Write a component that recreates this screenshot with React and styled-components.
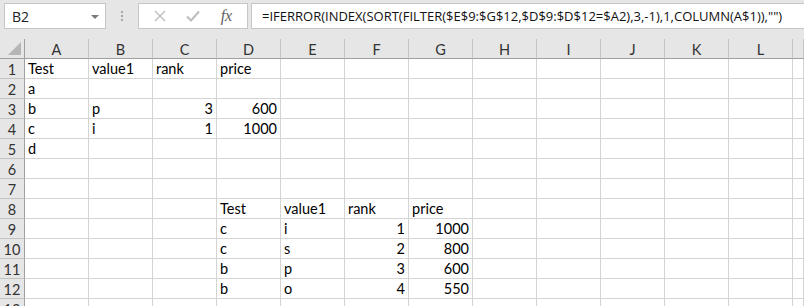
import React from "react";
import styled, { createGlobalStyle } from "styled-components";

const GlobalStyle = createGlobalStyle`
  html, body { margin: 0; padding: 0; background: #ffffff; }
  body { font-family: "Lato", "Liberation Sans", sans-serif; }
`;

const Window = styled.div`
  width: 804px;
  height: 306px;
  overflow: hidden;
  background: #e6e6e6;
  display: flex;
  flex-direction: column;
`;

const Toolbar = styled.div`
  height: 39px;
  box-sizing: border-box;
  display: flex;
  align-items: flex-start;
  padding: 3px 0 0 4px;
  flex-shrink: 0;
`;

const NameBox = styled.div`
  width: 102px;
  height: 26px;
  box-sizing: border-box;
  background: #fff;
  border: 1px solid #c6c6c6;
  display: flex;
  align-items: center;
  justify-content: space-between;
  padding: 0 6px 0 7px;
  font-family: "Open Sans", "Liberation Sans", sans-serif;
  font-size: 14px;
  color: #222;
`;

const DropArrow = styled.span`
  width: 0;
  height: 0;
  border-left: 4px solid transparent;
  border-right: 4px solid transparent;
  border-top: 4px solid #7a7a7a;
  margin-top: 1px;
`;

const Grip = styled.div`
  width: 32px;
  height: 26px;
  display: flex;
  flex-direction: column;
  align-items: center;
  justify-content: center;
  gap: 2px;
  & > span {
    width: 2px;
    height: 2px;
    background: #a6a6a6;
  }
`;

const ButtonsBox = styled.div`
  width: 110px;
  height: 26px;
  box-sizing: border-box;
  background: #fff;
  border: 1px solid #c6c6c6;
  display: flex;
  align-items: center;
  justify-content: space-around;
  padding: 0 4px;
`;

const IconBtn = styled.span`
  width: 26px;
  display: flex;
  align-items: center;
  justify-content: center;
  color: ${(p) => p.$color || "#bdbdbd"};
`;

const Fx = styled.span`
  font-family: "Liberation Serif", serif;
  font-style: italic;
  font-size: 16px;
  color: #5e5e5e;
  letter-spacing: -0.3px;
`;

const FormulaBox = styled.div`
  flex: 1;
  height: 26px;
  margin-left: 3px;
  box-sizing: border-box;
  background: #fff;
  border: 1px solid #c6c6c6;
  border-right: none;
  display: flex;
  align-items: center;
  padding-left: 10px;
  font-family: "Open Sans", "Liberation Sans", sans-serif;
  font-size: 13px;
  color: #111;
  white-space: nowrap;
  overflow: hidden;
`;

const Sheet = styled.div`
  display: grid;
  grid-template-columns: 25px repeat(12, 64px) 1fr;
  grid-auto-rows: 20px;
  background: #fff;
  flex: 1;
`;

const Corner = styled.div`
  background: #e6e6e6;
  border-right: 1px solid #9f9f9f;
  border-bottom: 1px solid #9f9f9f;
  box-sizing: border-box;
  position: relative;
  &::after {
    content: "";
    position: absolute;
    right: 3px;
    bottom: 3px;
    width: 0;
    height: 0;
    border-left: 13px solid transparent;
    border-bottom: 13px solid #b5b5b5;
  }
`;

const ColHead = styled.div`
  background: #e6e6e6;
  border-right: 1px solid #c3c3c3;
  border-bottom: 1px solid #9f9f9f;
  box-sizing: border-box;
  display: flex;
  align-items: center;
  justify-content: center;
  font-size: 14.5px;
  color: #333;
  padding-top: 1px;
`;

const RowHead = styled.div`
  background: #e6e6e6;
  border-right: 1px solid #9f9f9f;
  border-bottom: 1px solid #c3c3c3;
  box-sizing: border-box;
  display: flex;
  align-items: center;
  justify-content: center;
  font-size: 14.5px;
  color: #333;
  padding-top: 1px;
`;

const Cell = styled.div`
  border-right: 1px solid #d4d4d4;
  border-bottom: 1px solid #d4d4d4;
  box-sizing: border-box;
  padding: 0 3px;
  display: flex;
  align-items: flex-end;
  justify-content: ${(p) => (p.$num ? "flex-end" : "flex-start")};
  font-size: 14.5px;
  line-height: 18px;
  color: #000;
  white-space: nowrap;
  overflow: visible;
`;

const COLS = ["A", "B", "C", "D", "E", "F", "G", "H", "I", "J", "K", "L", ""];

const DATA = {
  1: { A: "Test", B: "value1", C: "rank", D: "price" },
  2: { A: "a" },
  3: { A: "b", B: "p", C: 3, D: 600 },
  4: { A: "c", B: "i", C: 1, D: 1000 },
  5: { A: "d" },
  8: { D: "Test", E: "value1", F: "rank", G: "price" },
  9: { D: "c", E: "i", F: 1, G: 1000 },
  10: { D: "c", E: "s", F: 2, G: 800 },
  11: { D: "b", E: "p", F: 3, G: 600 },
  12: { D: "b", E: "o", F: 4, G: 550 },
};

const CrossIcon = () => (
  <svg width="12" height="12" viewBox="0 0 12 12">
    <path d="M1 1 L11 11 M11 1 L1 11" stroke="currentColor" strokeWidth="1.4" fill="none" />
  </svg>
);

const CheckIcon = () => (
  <svg width="14" height="12" viewBox="0 0 14 12">
    <path d="M1 6.5 L5 10.5 L13 1.5" stroke="currentColor" strokeWidth="2" fill="none" />
  </svg>
);

export default function App() {
  const rows = Array.from({ length: 13 }, (_, i) => i + 1);
  return (
    <>
      <GlobalStyle />
      <Window>
        <Toolbar>
          <NameBox>
            <span>B2</span>
            <DropArrow />
          </NameBox>
          <Grip>
            <span />
            <span />
            <span />
          </Grip>
          <ButtonsBox>
            <IconBtn><CrossIcon /></IconBtn>
            <IconBtn><CheckIcon /></IconBtn>
            <IconBtn $color="#6a6a6a"><Fx>fx</Fx></IconBtn>
          </ButtonsBox>
          <FormulaBox>
            =IFERROR(INDEX(SORT(FILTER($E$9:$G$12,$D$9:$D$12=$A2),3,-1),1,COLUMN(A$1)),"")
          </FormulaBox>
        </Toolbar>
        <Sheet>
          <Corner />
          {COLS.map((c, i) => (
            <ColHead key={"h" + i}>{c}</ColHead>
          ))}
          {rows.map((r) => (
            <React.Fragment key={r}>
              <RowHead>{r}</RowHead>
              {COLS.map((c, i) => {
                const v = DATA[r] && c ? DATA[r][c] : undefined;
                return (
                  <Cell key={i} $num={typeof v === "number"}>
                    {v}
                  </Cell>
                );
              })}
            </React.Fragment>
          ))}
        </Sheet>
      </Window>
    </>
  );
}
